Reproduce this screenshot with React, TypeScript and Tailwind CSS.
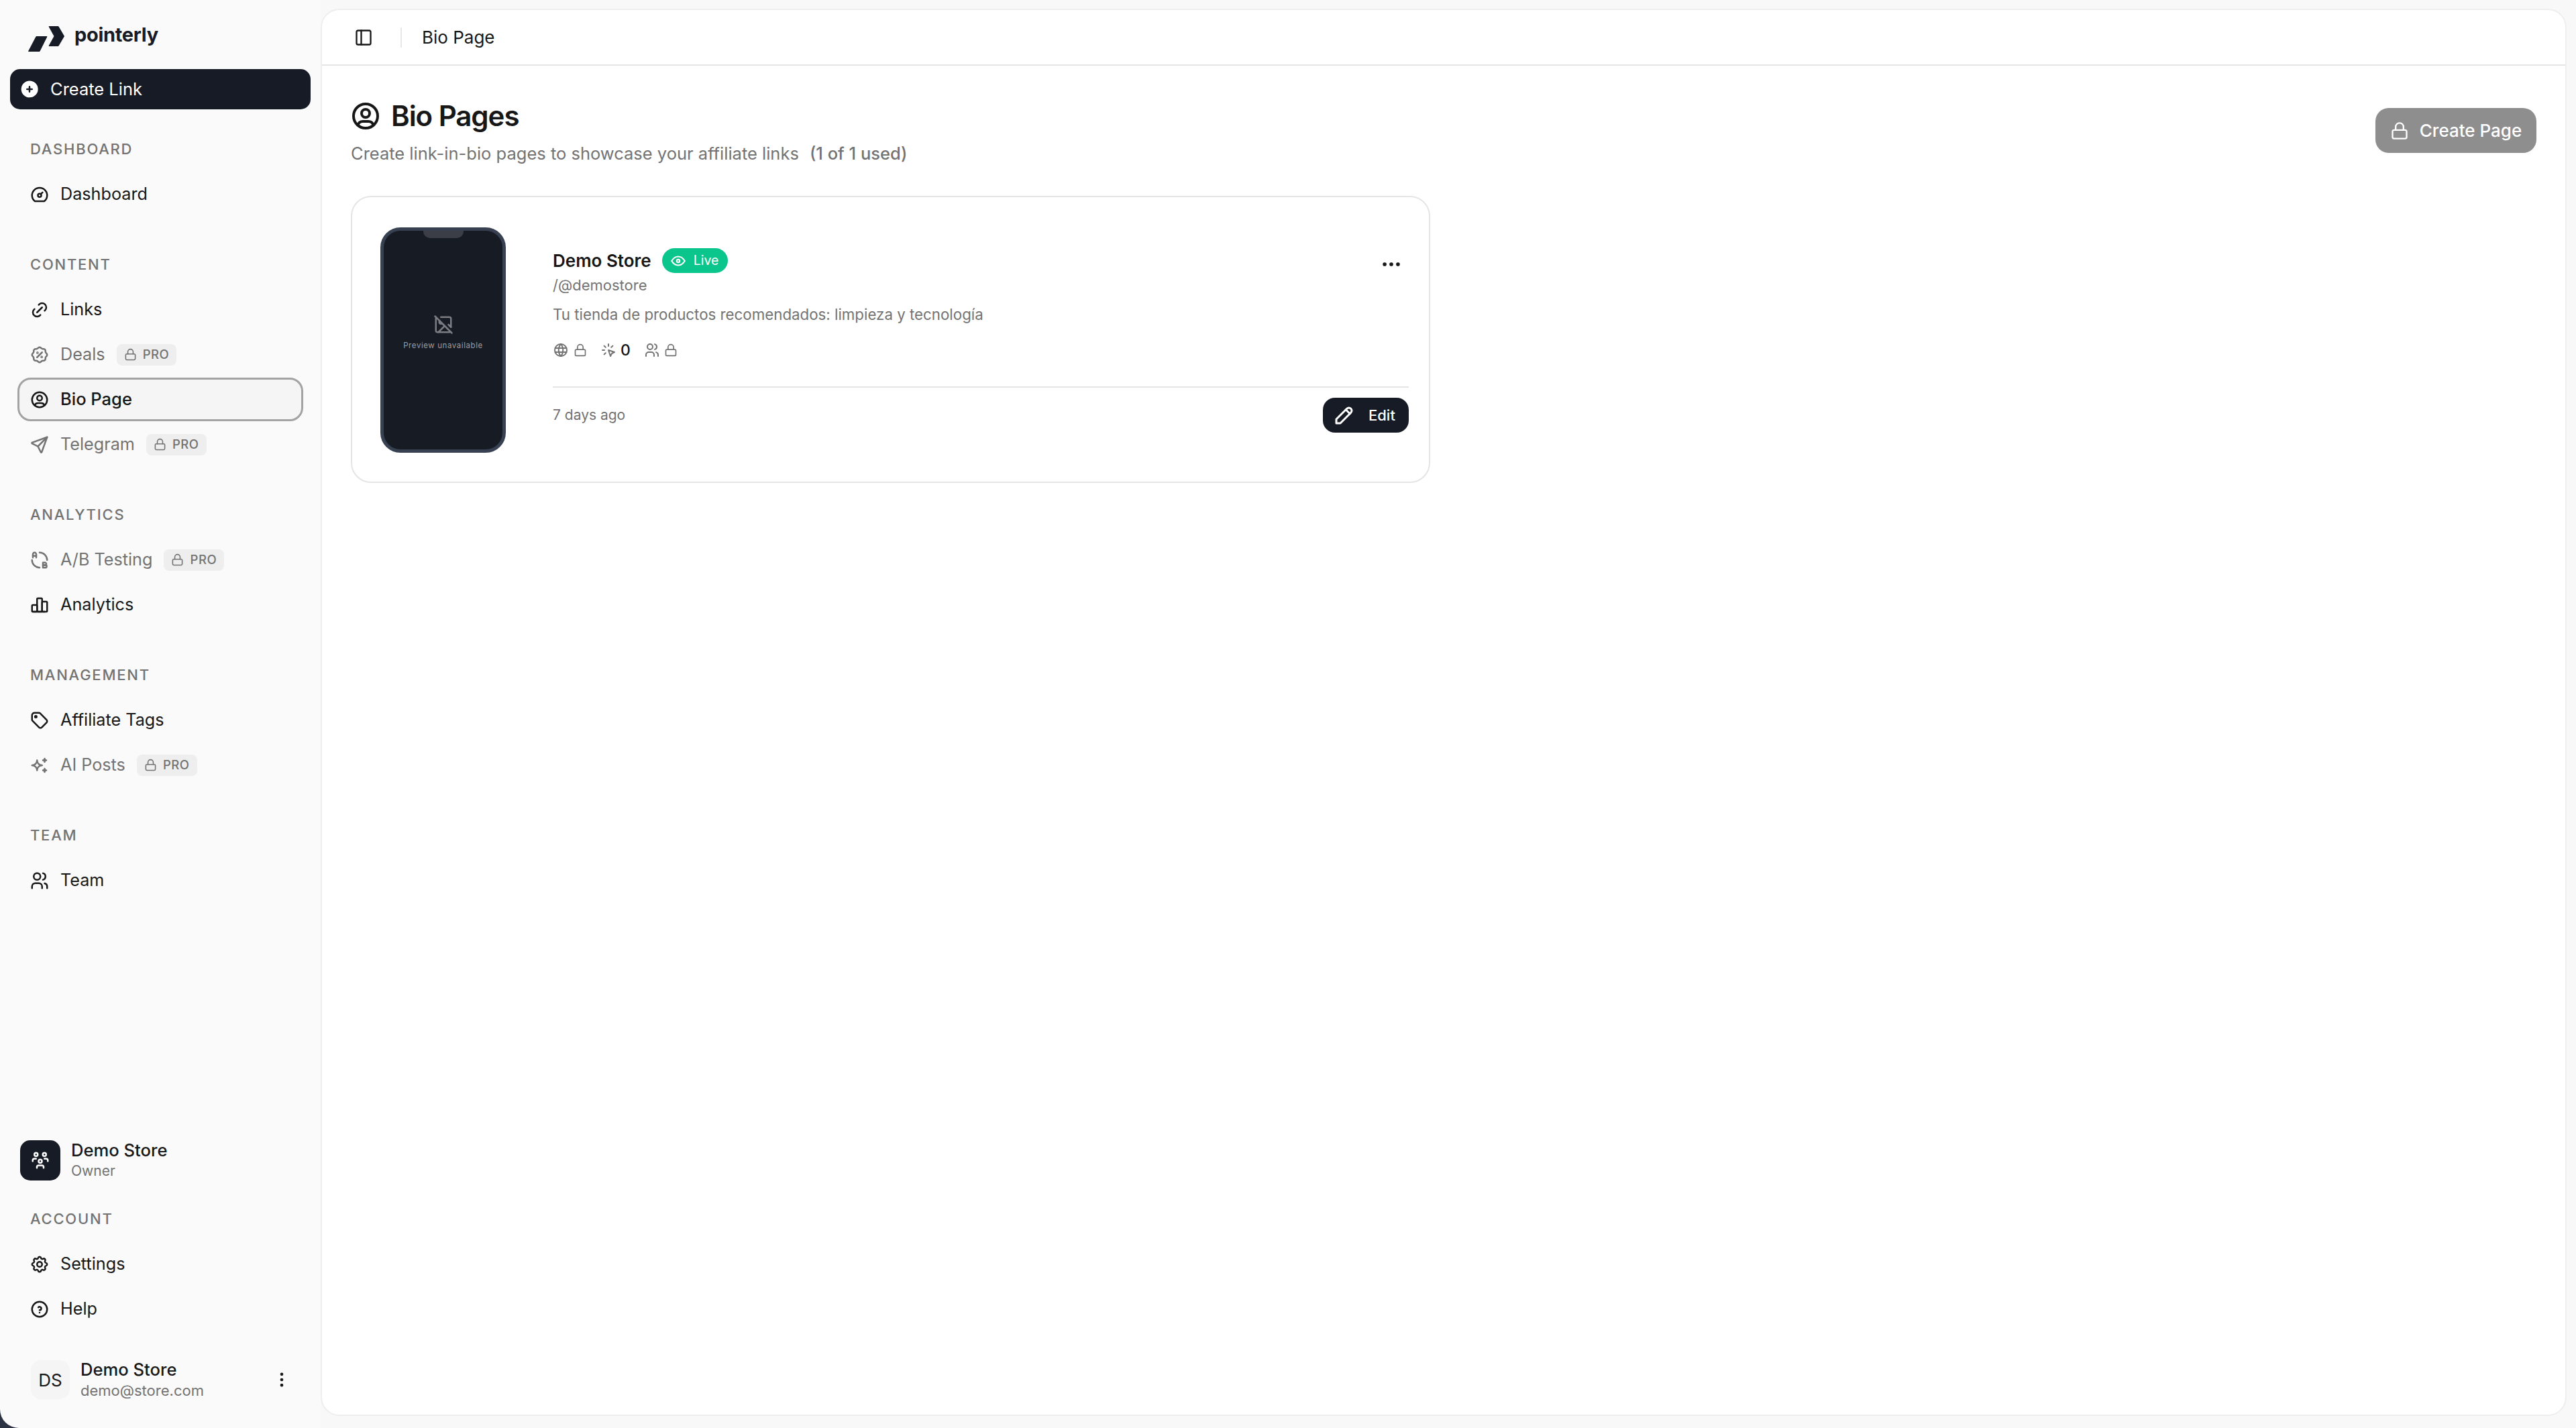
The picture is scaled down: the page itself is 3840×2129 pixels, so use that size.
import React from "react";
import { Lock, PanelLeft, ImageOff } from "lucide-react";
import {
  TbDashboard, TbLink, TbRosetteDiscount, TbUserCircle, TbSend, TbAB2, TbChartBar, TbTag, TbSparkles, TbUsers,
  TbSettings, TbHelpCircle, TbUsersGroup, TbCirclePlusFilled, TbDotsVertical, TbDots, TbWorld,
  TbClick, TbEye, TbPencil,
} from "react-icons/tb";

type Icon = React.ComponentType<{ className?: string; strokeWidth?: number }>;

function Pro() {
  return (
    <span className="ml-[17px] flex h-[32px] items-center gap-[9px] rounded-[8px] bg-[#eeeeee] px-[11px] text-[18.5px] font-medium tracking-[0.03em] text-[#737373]">
      <Lock className="size-[19px]" strokeWidth={2} />
      PRO
    </span>
  );
}

function NavItem({ icon: I, label, pro, active }: { icon: Icon; label: string; pro?: boolean; active?: boolean }) {
  return (
    <div
      className={
        "flex h-[65px] items-center rounded-[20px] pl-[15px] " +
        (active ? "border-[3px] border-[#a3a3a3] bg-[#f5f5f5] text-[25.5px] font-medium " : "border-[3px] border-transparent text-[25.2px] ") +
        (pro ? "text-[#737373]" : "text-[#171717]")
      }
    >
      <I className="size-[30px] shrink-0" strokeWidth={2} />
      <span className="ml-[16px]">{label}</span>
      {pro && <Pro />}
    </div>
  );
}

function Section({ title, children }: { title: string; children: React.ReactNode }) {
  return (
    <div className="flex flex-col gap-[2px]">
      <div className="flex h-[65px] items-center pl-[19px] text-[22px] font-medium tracking-[0.08em] text-[#737373]">{title}</div>
      {children}
    </div>
  );
}

function Logo() {
  return (
    <svg viewBox="0 0 56 40" className="h-[40px] w-[56px]" fill="#171b26" stroke="#171b26" strokeWidth="1" strokeLinejoin="round">
      <path d="M1.5 38.5 L13 16.5 L29 16.5 L18 38.5 Z" />
      <path d="M32 1.5 L46 1.5 L54.5 16 L46 30.5 L32 30.5 L40 16 Z" />
    </svg>
  );
}

export default function App() {
  return (
    <div className="h-[2129px] w-[3840px] overflow-hidden bg-[#2b3242] font-['Inter',sans-serif]">
      <div className="flex h-full rounded-b-[28px] bg-[#fafafa]">
        <aside className="flex w-[478px] shrink-0 flex-col justify-between px-[26px] pt-[38px] pb-[41px]">
          <div className="flex flex-col">
            <div className="flex h-[40px] items-center gap-[14px] pl-[15px]">
              <Logo />
              <span className="-mt-[12px] text-[29px] font-bold tracking-[-0.01em] text-[#171b26]">pointerly</span>
            </div>
            <div className="-mx-[11px] mt-[25px] flex h-[60px] items-center gap-[16px] rounded-[15px] bg-[#171b26] pl-[14px] text-[25.5px] font-normal text-white">
              <TbCirclePlusFilled className="size-[30px]" />
              Create Link
            </div>
            <div className="mt-[27px] flex flex-col gap-[40px]">
              <Section title="DASHBOARD">
                <NavItem icon={TbDashboard} label="Dashboard" />
              </Section>
              <Section title="CONTENT">
                <NavItem icon={TbLink} label="Links" />
                <NavItem icon={TbRosetteDiscount} label="Deals" pro />
                <NavItem icon={TbUserCircle} label="Bio Page" active />
                <NavItem icon={TbSend} label="Telegram" pro />
              </Section>
              <Section title="ANALYTICS">
                <NavItem icon={TbAB2} label="A/B Testing" pro />
                <NavItem icon={TbChartBar} label="Analytics" />
              </Section>
              <Section title="MANAGEMENT">
                <NavItem icon={TbTag} label="Affiliate Tags" />
                <NavItem icon={TbSparkles} label="AI Posts" pro />
              </Section>
              <Section title="TEAM">
                <NavItem icon={TbUsers} label="Team" />
              </Section>
            </div>
          </div>
          <div className="flex flex-col">
            <div className="flex items-center gap-[16px] pl-[4px]">
              <div className="flex size-[60px] items-center justify-center rounded-[15px] bg-[#171b26] text-white">
                <TbUsersGroup className="size-[30px]" />
              </div>
              <div className="flex flex-col">
                <span className="text-[25.6px] leading-[32px] font-medium text-[#171717]">Demo Store</span>
                <span className="text-[21px] leading-[29px] text-[#737373]">Owner</span>
              </div>
            </div>
            <div className="mt-[25px] flex flex-col gap-[2px]">
              <div className="flex h-[65px] items-center pl-[19px] text-[22px] font-medium tracking-[0.08em] text-[#737373]">ACCOUNT</div>
              <NavItem icon={TbSettings} label="Settings" />
              <NavItem icon={TbHelpCircle} label="Help" />
            </div>
            <div className="mt-[42px] flex items-center pr-[18px] pl-[20px]">
              <div className="flex size-[58px] items-center justify-center rounded-[15px] bg-[#f5f5f5] text-[26px] text-[#171717]">DS</div>
              <div className="ml-[16px] flex grow flex-col">
                <span className="text-[25.6px] leading-[32px] font-medium text-[#171717]">Demo Store</span>
                <span className="text-[22px] leading-[30px] text-[#737373]">demo@store.com</span>
              </div>
              <TbDotsVertical className="size-[28px] text-[#171717]" />
            </div>
          </div>
        </aside>
        <div className="flex grow flex-col bg-[#f8f8f8] pt-[13px] pr-[14px] pb-[18px]">
          <main className="flex grow flex-col rounded-[28px] border-2 border-[#eeeeee] bg-white">
            <header className="flex h-[83px] items-center border-b-2 border-[#e5e5e5] pl-[48px]">
              <PanelLeft className="size-[28px] text-[#171717]" strokeWidth={2} />
              <div className="mr-[30px] ml-[41px] h-[30px] w-[2px] bg-[#e8e8e8]" />
              <span className="-mt-[1px] text-[26px] font-normal text-[#171717]">Bio Page</span>
            </header>
            <div className="flex flex-col px-[43px] pt-[45px]">
              <div className="flex items-start justify-between">
                <div className="flex flex-col">
                  <div className="-ml-[2px] flex items-center gap-[14px]">
                    <TbUserCircle className="size-[48px] text-[#171717]" />
                    <h1 className="text-[42px] leading-[60px] font-semibold tracking-[-0.025em] text-[#171717]">Bio Pages</h1>
                  </div>
                  <p className="mt-[8px] text-[25.5px] leading-[36px] text-[#737373]">
                    Create link-in-bio pages to showcase your affiliate links
                    <span className="ml-[16px] font-medium">(1 of 1 used)</span>
                  </p>
                </div>
                <div className="mt-[18px] flex h-[67px] w-[240px] items-center justify-center gap-[16px] rounded-[20px] bg-[#8e8e8e] text-[26px] font-medium text-white">
                  <Lock className="size-[28px]" strokeWidth={2} />
                  Create Page
                </div>
              </div>
              <div className="mt-[45px] flex h-[428px] w-[1609px] rounded-[30px] border-2 border-[#e5e5e5] pl-[42px]">
                <div className="relative mt-[45px] flex h-[336px] w-[187px] shrink-0 flex-col items-center justify-center rounded-[30px] border-[5px] border-[#374151] bg-[#171b24] pb-[20px]">
                  <div className="absolute top-0 left-1/2 h-[11px] w-[60px] -translate-x-1/2 rounded-b-[10px] bg-[#3b3e46]" />
                  <ImageOff className="size-[30px] text-[#7b7d82]" strokeWidth={2} />
                  <span className="mt-[8px] text-[11.5px] tracking-[0.05em] text-[#9a9ca1]">Preview unavailable</span>
                </div>
                <div className="ml-[70px] flex grow flex-col pr-[30px]">
                  <div className="flex items-start justify-between pt-[76px]">
                    <div className="flex flex-col">
                      <div className="flex items-center gap-[16px]">
                        <span className="text-[26px] leading-[37px] font-semibold text-[#171717]">Demo Store</span>
                        <span className="flex h-[37px] items-center gap-[10px] rounded-full bg-[#0ac58c] pr-[14px] pl-[11px] text-[19.5px] font-normal text-white">
                          <TbEye className="size-[26px]" />
                          Live
                        </span>
                      </div>
                      <span className="mt-[4px] text-[22px] leading-[28px] text-[#737373]">/@demostore</span>
                      <span className="mt-[16px] text-[22.3px] leading-[28px] text-[#737373]">Tu tienda de productos recomendados: limpieza y tecnología</span>
                      <div className="mt-[25px] flex items-center text-[#737373]">
                        <TbWorld className="size-[24px]" />
                        <Lock className="ml-[7px] size-[20px]" strokeWidth={2} />
                        <TbClick className="ml-[20px] size-[24px]" />
                        <span className="ml-[6px] text-[23px] leading-[28px] font-medium text-[#171717]">0</span>
                        <TbUsers className="ml-[20px] size-[24px]" />
                        <Lock className="ml-[6px] size-[20px]" strokeWidth={2} />
                      </div>
                    </div>
                    <TbDots className="mt-[7px] mr-[9px] size-[34px] text-[#171717]" />
                  </div>
                  <div className="mt-[40px] h-[2px] bg-[#e5e5e5]" />
                  <div className="mt-[15px] flex items-center justify-between">
                    <span className="text-[21px] text-[#737373]">7 days ago</span>
                    <span className="flex h-[52px] w-[128px] items-center gap-[18px] rounded-[18px] bg-[#171b26] pl-[14px] text-[22px] font-medium text-white">
                      <TbPencil className="size-[36px]" />
                      Edit
                    </span>
                  </div>
                </div>
              </div>
            </div>
          </main>
        </div>
      </div>
    </div>
  );
}
